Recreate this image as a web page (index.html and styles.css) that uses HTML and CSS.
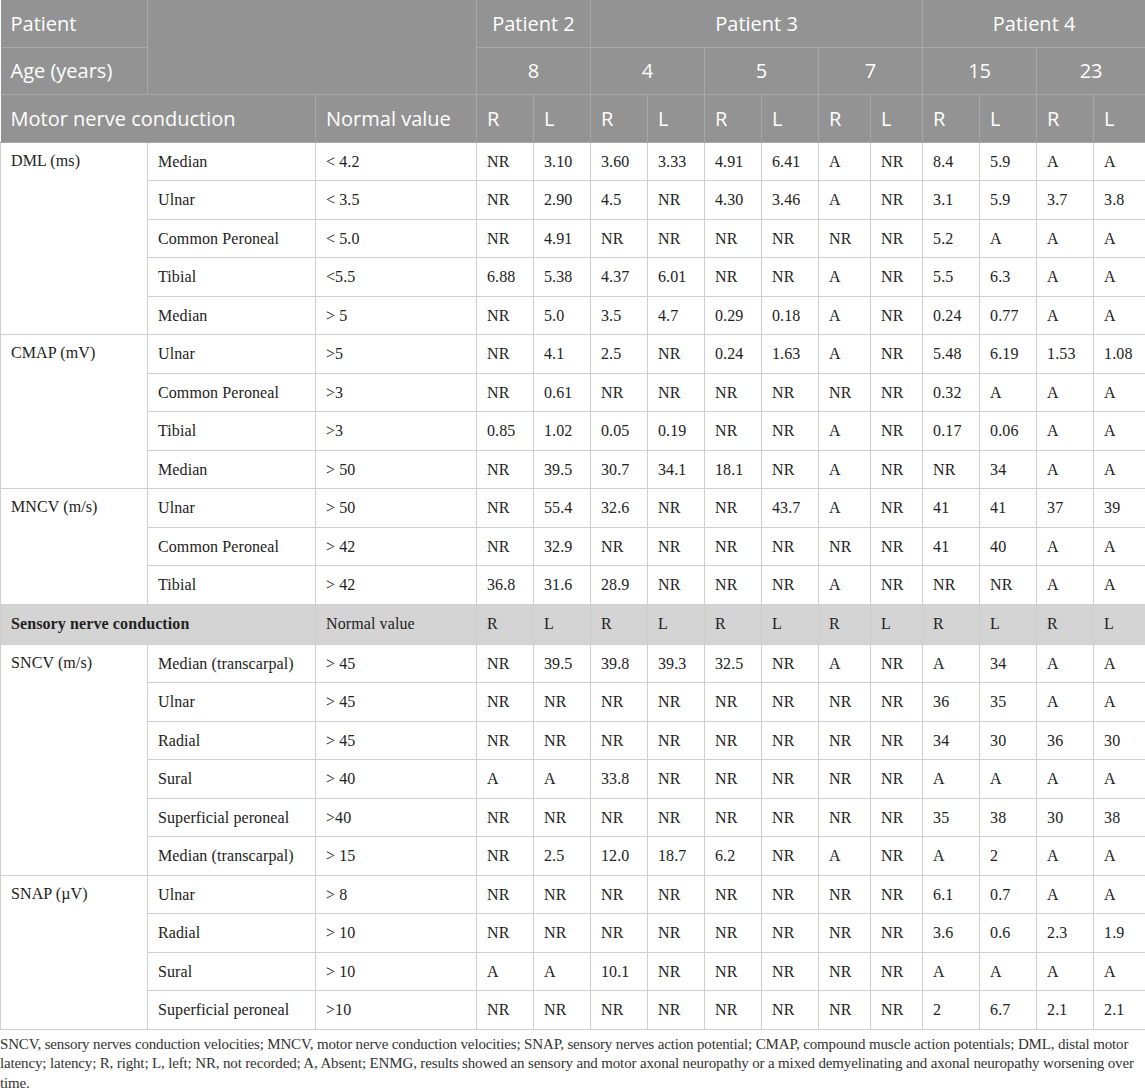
FILE: index.html
```html
<!DOCTYPE html>
<html lang="en">
<head>
    <meta charset="UTF-8">
    <title>Nerve conduction studies</title>
    <link rel="stylesheet" href="styles.css">
</head>
<body>
    <table class="ncs">
        <colgroup>
            <col style="width:147px"><col style="width:168px"><col style="width:161px">
            <col style="width:57px"><col style="width:57px">
            <col style="width:57px"><col style="width:57px">
            <col style="width:57px"><col style="width:57px">
            <col style="width:52px"><col style="width:52px">
            <col style="width:57px"><col style="width:57px">
            <col style="width:57px"><col style="width:52px">
        </colgroup>
        <thead>
            <tr>
                <th>Patient</th>
                <th colspan="2" rowspan="2"></th>
                <th colspan="2" class="mid">Patient 2</th>
                <th colspan="6" class="mid">Patient 3</th>
                <th colspan="4" class="mid">Patient 4</th>
            </tr>
            <tr>
                <th>Age (years)</th>
                <th colspan="2" class="mid">8</th>
                <th colspan="2" class="mid">4</th>
                <th colspan="2" class="mid">5</th>
                <th colspan="2" class="mid">7</th>
                <th colspan="2" class="mid">15</th>
                <th colspan="2" class="mid">23</th>
            </tr>
            <tr>
                <th colspan="2">Motor nerve conduction</th>
                <th>Normal value</th>
                <th>R</th><th>L</th><th>R</th><th>L</th><th>R</th><th>L</th>
                <th>R</th><th>L</th><th>R</th><th>L</th><th>R</th><th>L</th>
            </tr>
        </thead>
        <tbody>
            <tr>
                <td rowspan="5" class="group">DML (ms)</td>
                <td>Median</td><td>&lt; 4.2</td>
                <td>NR</td><td>3.10</td><td>3.60</td><td>3.33</td><td>4.91</td><td>6.41</td><td>A</td><td>NR</td><td>8.4</td><td>5.9</td><td>A</td><td>A</td>
            </tr>
            <tr>
                <td>Ulnar</td><td>&lt; 3.5</td>
                <td>NR</td><td>2.90</td><td>4.5</td><td>NR</td><td>4.30</td><td>3.46</td><td>A</td><td>NR</td><td>3.1</td><td>5.9</td><td>3.7</td><td>3.8</td>
            </tr>
            <tr>
                <td>Common Peroneal</td><td>&lt; 5.0</td>
                <td>NR</td><td>4.91</td><td>NR</td><td>NR</td><td>NR</td><td>NR</td><td>NR</td><td>NR</td><td>5.2</td><td>A</td><td>A</td><td>A</td>
            </tr>
            <tr>
                <td>Tibial</td><td>&lt;5.5</td>
                <td>6.88</td><td>5.38</td><td>4.37</td><td>6.01</td><td>NR</td><td>NR</td><td>A</td><td>NR</td><td>5.5</td><td>6.3</td><td>A</td><td>A</td>
            </tr>
            <tr>
                <td>Median</td><td>&gt; 5</td>
                <td>NR</td><td>5.0</td><td>3.5</td><td>4.7</td><td>0.29</td><td>0.18</td><td>A</td><td>NR</td><td>0.24</td><td>0.77</td><td>A</td><td>A</td>
            </tr>
            <tr>
                <td rowspan="4" class="group">CMAP (mV)</td>
                <td>Ulnar</td><td>&gt;5</td>
                <td>NR</td><td>4.1</td><td>2.5</td><td>NR</td><td>0.24</td><td>1.63</td><td>A</td><td>NR</td><td>5.48</td><td>6.19</td><td>1.53</td><td>1.08</td>
            </tr>
            <tr>
                <td>Common Peroneal</td><td>&gt;3</td>
                <td>NR</td><td>0.61</td><td>NR</td><td>NR</td><td>NR</td><td>NR</td><td>NR</td><td>NR</td><td>0.32</td><td>A</td><td>A</td><td>A</td>
            </tr>
            <tr>
                <td>Tibial</td><td>&gt;3</td>
                <td>0.85</td><td>1.02</td><td>0.05</td><td>0.19</td><td>NR</td><td>NR</td><td>A</td><td>NR</td><td>0.17</td><td>0.06</td><td>A</td><td>A</td>
            </tr>
            <tr>
                <td>Median</td><td>&gt; 50</td>
                <td>NR</td><td>39.5</td><td>30.7</td><td>34.1</td><td>18.1</td><td>NR</td><td>A</td><td>NR</td><td>NR</td><td>34</td><td>A</td><td>A</td>
            </tr>
            <tr>
                <td rowspan="3" class="group">MNCV (m/s)</td>
                <td>Ulnar</td><td>&gt; 50</td>
                <td>NR</td><td>55.4</td><td>32.6</td><td>NR</td><td>NR</td><td>43.7</td><td>A</td><td>NR</td><td>41</td><td>41</td><td>37</td><td>39</td>
            </tr>
            <tr>
                <td>Common Peroneal</td><td>&gt; 42</td>
                <td>NR</td><td>32.9</td><td>NR</td><td>NR</td><td>NR</td><td>NR</td><td>NR</td><td>NR</td><td>41</td><td>40</td><td>A</td><td>A</td>
            </tr>
            <tr>
                <td>Tibial</td><td>&gt; 42</td>
                <td>36.8</td><td>31.6</td><td>28.9</td><td>NR</td><td>NR</td><td>NR</td><td>A</td><td>NR</td><td>NR</td><td>NR</td><td>A</td><td>A</td>
            </tr>
            <tr class="subhead">
                <td colspan="2"><b>Sensory nerve conduction</b></td>
                <td>Normal value</td>
                <td>R</td><td>L</td><td>R</td><td>L</td><td>R</td><td>L</td>
                <td>R</td><td>L</td><td>R</td><td>L</td><td>R</td><td>L</td>
            </tr>
            <tr>
                <td rowspan="6" class="group">SNCV (m/s)</td>
                <td>Median (transcarpal)</td><td>&gt; 45</td>
                <td>NR</td><td>39.5</td><td>39.8</td><td>39.3</td><td>32.5</td><td>NR</td><td>A</td><td>NR</td><td>A</td><td>34</td><td>A</td><td>A</td>
            </tr>
            <tr>
                <td>Ulnar</td><td>&gt; 45</td>
                <td>NR</td><td>NR</td><td>NR</td><td>NR</td><td>NR</td><td>NR</td><td>NR</td><td>NR</td><td>36</td><td>35</td><td>A</td><td>A</td>
            </tr>
            <tr>
                <td>Radial</td><td>&gt; 45</td>
                <td>NR</td><td>NR</td><td>NR</td><td>NR</td><td>NR</td><td>NR</td><td>NR</td><td>NR</td><td>34</td><td>30</td><td>36</td><td>30</td>
            </tr>
            <tr>
                <td>Sural</td><td>&gt; 40</td>
                <td>A</td><td>A</td><td>33.8</td><td>NR</td><td>NR</td><td>NR</td><td>NR</td><td>NR</td><td>A</td><td>A</td><td>A</td><td>A</td>
            </tr>
            <tr>
                <td>Superficial peroneal</td><td>&gt;40</td>
                <td>NR</td><td>NR</td><td>NR</td><td>NR</td><td>NR</td><td>NR</td><td>NR</td><td>NR</td><td>35</td><td>38</td><td>30</td><td>38</td>
            </tr>
            <tr>
                <td>Median (transcarpal)</td><td>&gt; 15</td>
                <td>NR</td><td>2.5</td><td>12.0</td><td>18.7</td><td>6.2</td><td>NR</td><td>A</td><td>NR</td><td>A</td><td>2</td><td>A</td><td>A</td>
            </tr>
            <tr>
                <td rowspan="4" class="group">SNAP (µV)</td>
                <td>Ulnar</td><td>&gt; 8</td>
                <td>NR</td><td>NR</td><td>NR</td><td>NR</td><td>NR</td><td>NR</td><td>NR</td><td>NR</td><td>6.1</td><td>0.7</td><td>A</td><td>A</td>
            </tr>
            <tr>
                <td>Radial</td><td>&gt; 10</td>
                <td>NR</td><td>NR</td><td>NR</td><td>NR</td><td>NR</td><td>NR</td><td>NR</td><td>NR</td><td>3.6</td><td>0.6</td><td>2.3</td><td>1.9</td>
            </tr>
            <tr>
                <td>Sural</td><td>&gt; 10</td>
                <td>A</td><td>A</td><td>10.1</td><td>NR</td><td>NR</td><td>NR</td><td>NR</td><td>NR</td><td>A</td><td>A</td><td>A</td><td>A</td>
            </tr>
            <tr>
                <td>Superficial peroneal</td><td>&gt;10</td>
                <td>NR</td><td>NR</td><td>NR</td><td>NR</td><td>NR</td><td>NR</td><td>NR</td><td>NR</td><td>2</td><td>6.7</td><td>2.1</td><td>2.1</td>
            </tr>
        </tbody>
    </table>

    <p class="note">SNCV, sensory nerves conduction velocities; MNCV, motor nerve conduction velocities; SNAP, sensory nerves action potential; CMAP, compound muscle action potentials; DML, distal motor<br>latency; latency; R, right; L, left; NR, not recorded; A, Absent; ENMG, results showed an sensory and motor axonal neuropathy or a mixed demyelinating and axonal neuropathy worsening over<br>time.</p>
</body>
</html>
```

FILE: styles.css
```css
body {
    margin: 0;
    background-color: #ffffff;
    color: #222;
    font-family: "Liberation Serif", serif;
}

.ncs {
    width: 1145px;
    table-layout: fixed;
    border-collapse: collapse;
}

.ncs th {
    background-color: #939393;
    color: #ffffff;
    font-family: "Open Sans", sans-serif;
    font-weight: 400;
    font-size: 20px;
    text-align: left;
    height: 46.6px;
    padding: 0 10px;
    border: 1px solid #a8a8a8;
    border-top: none;
    white-space: nowrap;
}

.ncs th:first-child {
    border-left: none;
}

.ncs th.mid {
    text-align: center;
}

.ncs td {
    height: 37.5px;
    padding: 0 10px;
    font-size: 16px;
    letter-spacing: 0.1px;
    border: 1px solid #cfcfcf;
    white-space: nowrap;
    vertical-align: middle;
}

.ncs td.group {
    vertical-align: top;
    padding-top: 8px;
    line-height: 20px;
}

.ncs .subhead td {
    background-color: #d4d4d4;
    height: 39px;
}

.note {
    margin: 5px 0 0;
    font-size: 15px;
    line-height: 19.5px;
    letter-spacing: -0.15px;
    white-space: nowrap;
    color: #333;
}
```
